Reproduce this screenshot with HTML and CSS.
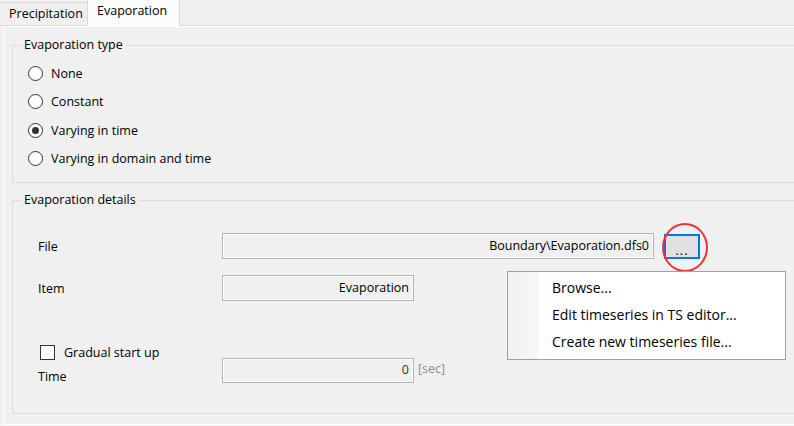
FILE: index.html
```html
<!DOCTYPE html>
<html lang="en">
  <head>
    <meta charset="utf-8" />
    <title>Evaporation</title>
    <link rel="stylesheet" href="styles.css">
  </head>
  <body>
    <div class="tabs">
      <div class="tab">Precipitation</div>
      <div class="tab tab-active">Evaporation</div>
    </div>
    <div class="panel">
      <fieldset class="group group-type">
        <legend>Evaporation type</legend>
        <div class="radio"><span class="radio-dot"></span>None</div>
        <div class="radio"><span class="radio-dot"></span>Constant</div>
        <div class="radio"><span class="radio-dot checked"></span>Varying in time</div>
        <div class="radio"><span class="radio-dot"></span>Varying in domain and time</div>
      </fieldset>
      <fieldset class="group group-details">
        <legend>Evaporation details</legend>
        <div class="row">
          <span class="label">File</span>
          <div class="field field-file">Boundary\Evaporation.dfs0</div>
          <div class="btn-browse">...</div>
        </div>
        <div class="row row-item">
          <span class="label">Item</span>
          <div class="field">Evaporation</div>
        </div>
        <div class="check-row"><span class="check"></span>Gradual start up</div>
        <div class="row row-time">
          <span class="label label-time">Time</span>
          <div class="field field-time">0</div>
          <span class="unit">[sec]</span>
        </div>
      </fieldset>
    </div>
    <span class="highlight"></span>
    <ul class="menu">
      <li>Browse...</li>
      <li>Edit timeseries in TS editor...</li>
      <li>Create new timeseries file...</li>
    </ul>
  </body>
</html>
```

FILE: styles.css
```css
body {
  margin: 0;
  width: 794px;
  height: 426px;
  overflow: hidden;
  background-color: #f0f0f0;
  font-family: "Open Sans", "Liberation Sans", sans-serif;
  font-size: 12.5px;
  color: #000;
}
.tabs {
  display: flex;
  align-items: flex-end;
  height: 26px;
  border-bottom: 1px solid #d9d9d9;
  box-sizing: border-box;
}
.tab {
  height: 22px;
  line-height: 21px;
  padding: 0 8px 0 9px;
  width: 71px;
  border: 1px solid #d9d9d9;
  border-bottom: none;
  border-right: none;
  margin-left: -1px;
}
.tab-active {
  height: 26px;
  line-height: 22px;
  width: 74px;
  background-color: #fcfcfc;
  border-right: 1px solid #d9d9d9;
  margin-bottom: -1px;
  position: relative;
}
.panel {
  margin-left: 3px;
  height: 397px;
  border-top: 1px solid #fff;
  border-left: 1px solid #fff;
  border-bottom: 1px solid #fff;
  padding-left: 8px;
}
.group {
  margin: 0;
  width: 800px;
  padding: 0 0 0 8px;
  border: 1px solid #dcdcdc;
  min-inline-size: 0;
}
.group legend {
  padding: 0 3px;
  line-height: 16px;
}
.group-type {
  margin-top: 10px;
  padding-top: 6px;
  padding-bottom: 9px;
}
.group-details {
  margin-top: 9px;
  padding-top: 25px;
  padding-bottom: 28px;
}
.radio {
  display: flex;
  align-items: center;
  height: 28.5px;
  margin-left: 7px;
}
.radio-dot {
  width: 13px;
  height: 13px;
  border: 1px solid #333;
  border-radius: 50%;
  background-color: #fff;
  margin-right: 8px;
  display: flex;
  align-items: center;
  justify-content: center;
}
.radio-dot.checked::after {
  content: "";
  width: 7px;
  height: 7px;
  border-radius: 50%;
  background-color: #333;
}
.row {
  display: flex;
  align-items: center;
  margin-left: 17px;
}
.row-item {
  margin-top: 16px;
}
.label {
  width: 184px;
}
.field {
  width: 192px;
  height: 26px;
  box-sizing: border-box;
  border: 1px solid #b4b4b4;
  box-shadow: inset 1px 1px 0 #fff, inset -1px -1px 0 #fff;
  text-align: right;
  line-height: 23px;
  padding-right: 4px;
}
.field-file {
  width: 432px;
}
.btn-browse {
  width: 36px;
  height: 25px;
  box-sizing: border-box;
  margin-left: 10px;
  border: 2px solid #0078d7;
  background-color: #e1e1e1;
  text-align: center;
  line-height: 30px;
  letter-spacing: 1px;
  overflow: hidden;
}
.check-row {
  display: flex;
  align-items: center;
  height: 16px;
  margin: 43px 0 0 19px;
}
.check {
  width: 13px;
  height: 13px;
  border: 1px solid #333;
  background-color: #fff;
  margin-right: 9px;
}
.row-time {
  align-items: flex-start;
  margin-top: -2px;
}
.label-time {
  padding-top: 10px;
}
.field-time {
  height: 25px;
  line-height: 22px;
  color: #333;
}
.unit {
  color: #8c8c8c;
  margin-left: 4px;
  line-height: 22px;
}
.highlight {
  position: absolute;
  left: 662px;
  top: 223px;
  width: 42px;
  height: 45px;
  border: 2.5px solid #e8373c;
  border-radius: 50%;
}
.menu {
  position: absolute;
  left: 507px;
  top: 271px;
  width: 277px;
  height: 85px;
  margin: 0;
  padding: 2px 0 0 0;
  list-style: none;
  box-sizing: content-box;
  border: 1px solid #a0a0a0;
  background: linear-gradient(to right, #f1f1f1 0, #f7f7f7 30px, #fff 31px);
  font-size: 14px;
}
.menu li {
  height: 27px;
  line-height: 27px;
  padding-left: 44px;
}
```
